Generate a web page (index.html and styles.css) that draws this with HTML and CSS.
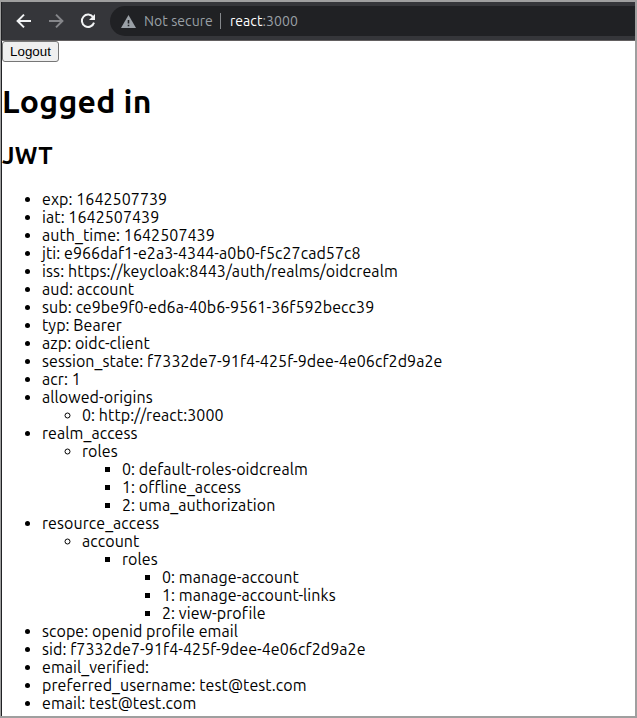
FILE: index.html
```html
<!DOCTYPE html>
<html lang="en">
<head>
<meta charset="utf-8">
<title>react:3000</title>
<link rel="stylesheet" href="styles.css">
</head>
<body>
<header class="toolbar">
  <svg class="icon" viewBox="0 0 16 16"><path d="M15 8H2M8 1.6L1.6 8L8 14.4"/></svg>
  <svg class="icon dim" viewBox="0 0 16 16"><path d="M1 8H14M8 1.6L14.4 8L8 14.4"/></svg>
  <svg class="icon" viewBox="0 0 16 16"><path d="M13.2 4.3A6.2 6.2 0 1 0 14 9.6"/><path class="solid" d="M15 1V7H9Z"/></svg>
  <div class="address">
    <svg class="warning" viewBox="0 0 15 13"><path fill="#9aa0a6" d="M7.5 0L15 13H0Z"/><path fill="#202124" d="M6.7 5H8.3V8.5H6.7ZM6.7 9.7H8.3V11.3H6.7Z"/></svg>
    <span class="status">Not secure</span>
    <span class="divider"></span>
    <span class="url"><span class="host">react</span>:3000</span>
  </div>
</header>
<main>
  <button class="logout">Logout</button>
  <h1>Logged in</h1>
  <h2>JWT</h2>
  <ul>
    <li>exp: 1642507739</li>
    <li>iat: 1642507439</li>
    <li>auth_time: 1642507439</li>
    <li>jti: e966daf1-e2a3-4344-a0b0-f5c27cad57c8</li>
    <li class="issuer">iss: https://keycloak:8443/auth/realms/oidcrealm</li>
    <li>aud: account</li>
    <li>sub: ce9be9f0-ed6a-40b6-9561-36f592becc39</li>
    <li>typ: Bearer</li>
    <li>azp: oidc-client</li>
    <li>session_state: f7332de7-91f4-425f-9dee-4e06cf2d9a2e</li>
    <li>acr: 1</li>
    <li>allowed-origins
      <ul><li>0: http://react:3000</li></ul>
    </li>
    <li>realm_access
      <ul>
        <li>roles
          <ul>
            <li>0: default-roles-oidcrealm</li>
            <li>1: offline_access</li>
            <li>2: uma_authorization</li>
          </ul>
        </li>
      </ul>
    </li>
    <li>resource_access
      <ul>
        <li>account
          <ul>
            <li>roles
              <ul>
                <li>0: manage-account</li>
                <li>1: manage-account-links</li>
                <li>2: view-profile</li>
              </ul>
            </li>
          </ul>
        </li>
      </ul>
    </li>
    <li>scope: openid profile email</li>
    <li>sid: f7332de7-91f4-425f-9dee-4e06cf2d9a2e</li>
    <li>email_verified:</li>
    <li>preferred_username: test@test.com</li>
    <li>email: test@test.com</li>
  </ul>
</main>
</body>
</html>
```
FILE: styles.css
```css
* { box-sizing: border-box; }
body {
  margin: 0;
  height: 718px;
  overflow: hidden;
  border: 2px solid #9f9f9f;
  border-left-width: 1px;
  background: #fff;
  color: #000;
  font: 16px/18px Ubuntu, "Noto Sans", sans-serif;
  letter-spacing: 0.07px;
  font-variant-ligatures: common-ligatures;
}
.toolbar {
  display: flex;
  align-items: center;
  height: 39px;
  padding-left: 14px;
  border-left: 1px solid #202124;
  border-bottom: 1px solid #625f60;
  background: #35363a;
}
.icon {
  width: 16px;
  height: 16px;
  margin-right: 16px;
  fill: none;
  stroke: #f1f3f4;
  stroke-width: 2;
}
.icon.dim { stroke: #85868a; }
.icon .solid { fill: #f1f3f4; stroke: none; }
.address {
  display: flex;
  align-items: center;
  flex: 1;
  height: 30px;
  margin-left: -2px;
  padding-left: 11px;
  border-radius: 15px 0 0 15px;
  background: #202124;
  color: #9aa0a6;
  font-size: 14px;
}
.warning { width: 15px; height: 13px; margin-right: 8px; }
.divider { width: 1px; height: 16px; margin: 0 9px 0 7px; background: #85888c; }
.host { color: #fff; }
main {
  height: 675px;
  border-left: 1px solid #202124;
}
.logout {
  display: block;
  width: 57px;
  height: 21px;
  padding: 0;
  border: 1px solid #767676;
  border-radius: 3px;
  background: #efefef;
  color: #000;
  font: 13.33px "Liberation Sans", Arial, sans-serif;
}
h1 {
  margin: 21px 0 0;
  font-size: 32px;
  line-height: 37px;
  letter-spacing: 0.25px;
}
h2 {
  margin: 22px 0 0;
  font-size: 24px;
  line-height: 27px;
  letter-spacing: 0.25px;
}
ul { margin: 0; padding-left: 40px; }
main > ul { margin-top: 21px; }
.issuer { letter-spacing: 0.12px; }
```
